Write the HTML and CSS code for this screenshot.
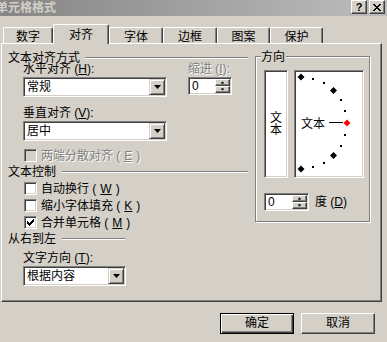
FILE: index.html
```html
<!DOCTYPE html>
<html lang="zh-CN">
<head>
    <meta charset="UTF-8">
    <title>单元格格式</title>
    <link rel="stylesheet" href="styles.css">
</head>
<body>

    <div class="titlebar">
        <span class="title">单元格格式</span>
        <div class="caption-buttons">
            <span class="caption-btn help">?</span>
            <span class="caption-btn">
                <svg width="8" height="7" viewBox="0 0 8 7" shape-rendering="crispEdges">
                    <path d="M0,0h2v1h-2zM6,0h2v1h-2zM1,1h2v1h-2zM5,1h2v1h-2zM2,2h4v1h-4zM3,3h2v1h-2zM2,4h4v1h-4zM1,5h2v1h-2zM5,5h2v1h-2zM0,6h2v1h-2zM6,6h2v1h-2z" fill="#000"/>
                </svg>
            </span>
        </div>
    </div>

    <div class="tabs">
        <div class="tab" style="width: 50px;">数字</div>
        <div class="tab active" style="width: 56px;">对齐</div>
        <div class="tab" style="width: 54px;">字体</div>
        <div class="tab" style="width: 54px;">边框</div>
        <div class="tab" style="width: 53px;">图案</div>
        <div class="tab" style="width: 53px;">保护</div>
    </div>

    <div class="panel">
        <div class="left">
            <div class="group-head"><span>文本对齐方式</span><i class="rule"></i></div>
            <div class="indent">
                <div class="align-row">
                    <div class="col-main">
                        <div class="label">水平对齐 (<u>H</u>):</div>
                        <div class="combo wide"><span>常规</span><b class="drop"><svg width="7" height="4" viewBox="0 0 7 4"><path d="M0,0H7L3.5,4Z" fill="#000"/></svg></b></div>
                        <div class="label label-gap">垂直对齐 (<u>V</u>):</div>
                        <div class="combo wide"><span>居中</span><b class="drop"><svg width="7" height="4" viewBox="0 0 7 4"><path d="M0,0H7L3.5,4Z" fill="#000"/></svg></b></div>
                    </div>
                    <div class="col-indent">
                        <div class="label disabled">缩进 (<u>I</u>):</div>
                        <div class="spin">
                            <span class="spin-value">0</span>
                            <span class="spin-btns">
                                <b class="spin-half"><svg width="5" height="3" viewBox="0 0 5 3"><path d="M2.5,0L5,3H0Z" fill="#000"/></svg></b>
                                <b class="spin-half"><svg width="5" height="3" viewBox="0 0 5 3"><path d="M0,0H5L2.5,3Z" fill="#000"/></svg></b>
                            </span>
                        </div>
                    </div>
                </div>
                <div class="check disabled first-check"><span class="box"></span>两端分散对齐 (<u>E</u>)</div>
            </div>

            <div class="group-head section"><span>文本控制</span><i class="rule wide-gap"></i></div>
            <div class="indent">
                <div class="check"><span class="box"></span>自动换行 (<u>W</u>)</div>
                <div class="check"><span class="box"></span>缩小字体填充 (<u>K</u>)</div>
                <div class="check"><span class="box"><svg width="7" height="7" viewBox="0 0 7 7" shape-rendering="crispEdges"><path d="M6,0h1v3h-1v1h-1v1h-1v1h-1v1h-1v-1h-1v-1h-1v-3h1v1h1v1h1v-1h1v-1h1z" fill="#000"/></svg></span>合并单元格 (<u>M</u>)</div>
            </div>

            <div class="group-head section short"><span>从右到左</span><i class="rule wide-gap"></i></div>
            <div class="indent">
                <div class="label label-gap2">文字方向 (<u>T</u>):</div>
                <div class="combo narrow"><span>根据内容</span><b class="drop"><svg width="7" height="4" viewBox="0 0 7 4"><path d="M0,0H7L3.5,4Z" fill="#000"/></svg></b></div>
            </div>
        </div>

        <div class="direction">
            <span class="legend">方向</span>
            <div class="orient">
                <div class="vbox"><span>文</span><span>本</span></div>
                <div class="dial">
                    <svg width="66" height="104" viewBox="0 0 66 104">
                        <path d="M5,1.5L8.5,5L5,8.5L1.5,5Z M37.5,15L41,18.5L37.5,22L34,18.5Z M37.5,80L41,83.5L37.5,87L34,83.5Z M5,93.5L8.5,97L5,100.5L1.5,97Z" fill="#000"/>
                        <g fill="#000">
                            <rect x="16" y="6" width="2" height="2"/>
                            <rect x="27" y="10" width="2" height="2"/>
                            <rect x="44" y="27" width="2" height="2"/>
                            <rect x="48" y="38" width="2" height="2"/>
                            <rect x="48" y="62" width="2" height="2"/>
                            <rect x="44" y="73" width="2" height="2"/>
                            <rect x="27" y="90" width="2" height="2"/>
                            <rect x="16" y="94" width="2" height="2"/>
                        </g>
                        <text x="5" y="56" class="dial-text">文本</text>
                        <rect x="33" y="50" width="14" height="1" fill="#000"/>
                        <path d="M51,47.5L54.5,51L51,54.5L47.5,51Z" fill="#ff0000"/>
                    </svg>
                </div>
            </div>
            <div class="degree-row">
                <div class="spin deg">
                    <span class="spin-value">0</span>
                    <span class="spin-btns">
                        <b class="spin-half"><svg width="5" height="3" viewBox="0 0 5 3"><path d="M2.5,0L5,3H0Z" fill="#000"/></svg></b>
                        <b class="spin-half"><svg width="5" height="3" viewBox="0 0 5 3"><path d="M0,0H5L2.5,3Z" fill="#000"/></svg></b>
                    </span>
                </div>
                <span>度 (<u>D</u>)</span>
            </div>
        </div>
    </div>

    <div class="footer">
        <div class="btn default">确定</div>
        <div class="btn">取消</div>
    </div>

</body>
</html>
```

FILE: styles.css
```css
body {
    margin: 0;
    width: 387px;
    height: 342px;
    overflow: hidden;
    background-color: #d4d0c8;
    font-family: "Liberation Sans", "Noto Sans CJK SC", sans-serif;
    font-size: 12px;
    line-height: 12px;
    color: #000;
}

u {
    text-decoration: underline;
}

/* title bar (inactive window) */
.titlebar {
    display: flex;
    justify-content: space-between;
    height: 16px;
    background: linear-gradient(to right, #858585, #bdbdbd);
}

.title {
    margin-left: -4px;
    margin-top: 2px;
    font-weight: bold;
    color: #d4d0c8;
}

.caption-buttons {
    display: flex;
    gap: 2px;
    margin-right: 2px;
}

.caption-btn {
    display: flex;
    align-items: center;
    justify-content: center;
    width: 16px;
    height: 14px;
    box-sizing: border-box;
    background-color: #d4d0c8;
    border: 1px solid;
    border-color: #fff #404040 #404040 #fff;
    box-shadow: inset -1px -1px #808080;
}

.help {
    font-weight: bold;
    font-size: 11px;
}

/* tabs */
.tabs {
    display: flex;
    align-items: flex-end;
    height: 19px;
    margin-top: 8px;
    padding-left: 3px;
}

.tab {
    height: 16px;
    box-sizing: border-box;
    padding-top: 3px;
    text-align: center;
    border-top: 1px solid #fff;
    border-left: 1px solid #fff;
    border-right: 1px solid #404040;
    border-radius: 2px 2px 0 0;
    box-shadow: inset -1px 0 #808080;
}

.tab.active {
    position: relative;
    z-index: 1;
    height: 20px;
    margin-bottom: -1px;
    padding-top: 4px;
    background-color: #d4d0c8;
}

/* page */
.panel {
    display: flex;
    width: 381px;
    height: 259px;
    margin-left: 1px;
    box-sizing: border-box;
    padding: 8px 0 0 6px;
    border: 1px solid;
    border-color: #fff #404040 #404040 #fff;
    box-shadow: inset -1px -1px #808080;
}

.left {
    width: 247px;
}

.group-head {
    display: flex;
    align-items: center;
    width: 240px;
}

.group-head.short {
    width: 117px;
}

.section {
    margin-top: 4px;
}

.rule {
    flex: 1;
    height: 0;
    margin-left: 5px;
    border-top: 1px solid #808080;
    border-bottom: 1px solid #fff;
}

.rule.wide-gap {
    margin-left: 6px;
}

.indent {
    padding-left: 15px;
}

.align-row {
    display: flex;
    gap: 21px;
}

.label {
    margin-top: -1px;
    height: 13px;
}

.label-gap {
    margin-top: 10px;
}

.label-gap2 {
    margin-top: 7px;
}

.disabled {
    color: #808080;
    text-shadow: 1px 1px 0 #fff;
}

/* sunken fields */
.combo,
.spin,
.box,
.vbox,
.dial {
    box-sizing: border-box;
    background-color: #fff;
    border: 1px solid;
    border-color: #808080 #fff #fff #808080;
    box-shadow: inset 1px 1px #404040, inset -1px -1px #d4d0c8;
    padding: 1px;
}

.combo {
    display: flex;
    align-items: center;
    height: 20px;
    margin-top: 1px;
}

.combo.wide {
    width: 144px;
}

.combo.narrow {
    width: 103px;
}

.combo span {
    flex: 1;
    padding-left: 2px;
}

.drop {
    display: flex;
    align-items: center;
    justify-content: center;
    width: 16px;
    height: 16px;
    box-sizing: border-box;
    background-color: #d4d0c8;
    border: 1px solid;
    border-color: #d4d0c8 #404040 #404040 #d4d0c8;
    box-shadow: inset 1px 1px #fff, inset -1px -1px #808080;
}

.spin {
    display: flex;
    width: 44px;
    height: 18px;
    margin-top: 1px;
}

.spin.deg {
    width: 45px;
    margin-top: 0;
}

.spin-value {
    flex: 1;
    padding-left: 2px;
    line-height: 14px;
}

.spin-btns {
    display: flex;
    flex-direction: column;
    width: 15px;
}

.spin-half {
    display: flex;
    align-items: center;
    justify-content: center;
    height: 7px;
    box-sizing: border-box;
    background-color: #d4d0c8;
    border: 1px solid;
    border-color: #fff #404040 #404040 #fff;
    box-shadow: inset -1px -1px #808080;
}

.spin-half svg {
    display: block;
    transform: scale(0.8);
}

/* checkboxes */
.check {
    display: flex;
    align-items: center;
    gap: 4px;
    height: 13px;
    margin: 4px 0 0 1px;
}

.check.first-check {
    margin-top: 8px;
}

.box {
    display: flex;
    width: 13px;
    height: 13px;
}

.box svg {
    margin: 1px;
}

.check.disabled .box {
    background-color: #d4d0c8;
}

/* orientation group */
.direction {
    position: relative;
    width: 115px;
    height: 166px;
    margin-top: 4px;
    box-sizing: border-box;
    padding: 13px 0 0 8px;
    border: 1px solid #808080;
    box-shadow: 1px 1px 0 #fff, inset 1px 1px 0 #fff;
}

.legend {
    position: absolute;
    top: -6px;
    left: 5px;
    padding: 0 1px 0 0;
    background-color: #d4d0c8;
}

.orient {
    display: flex;
    gap: 6px;
}

.vbox {
    display: flex;
    flex-direction: column;
    align-items: center;
    justify-content: center;
    width: 24px;
    height: 108px;
}

.dial {
    width: 70px;
    height: 108px;
}

.dial svg {
    display: block;
}

.dial-text {
    font-family: "Noto Sans CJK SC", sans-serif;
    font-size: 12px;
    fill: #000;
}

.degree-row {
    display: flex;
    align-items: center;
    gap: 6px;
    margin-top: 15px;
}

/* buttons */
.footer {
    display: flex;
    justify-content: flex-end;
    gap: 7px;
    margin-top: 11px;
    padding-right: 12px;
}

.btn {
    width: 74px;
    height: 21px;
    box-sizing: border-box;
    line-height: 18px;
    text-align: center;
    border: 1px solid;
    border-color: #fff #404040 #404040 #fff;
    box-shadow: inset -1px -1px #808080;
}

.btn.default {
    border-color: #000;
    box-shadow: inset 1px 1px #fff, inset -1px -1px #404040, inset -2px -2px #808080;
}
```
